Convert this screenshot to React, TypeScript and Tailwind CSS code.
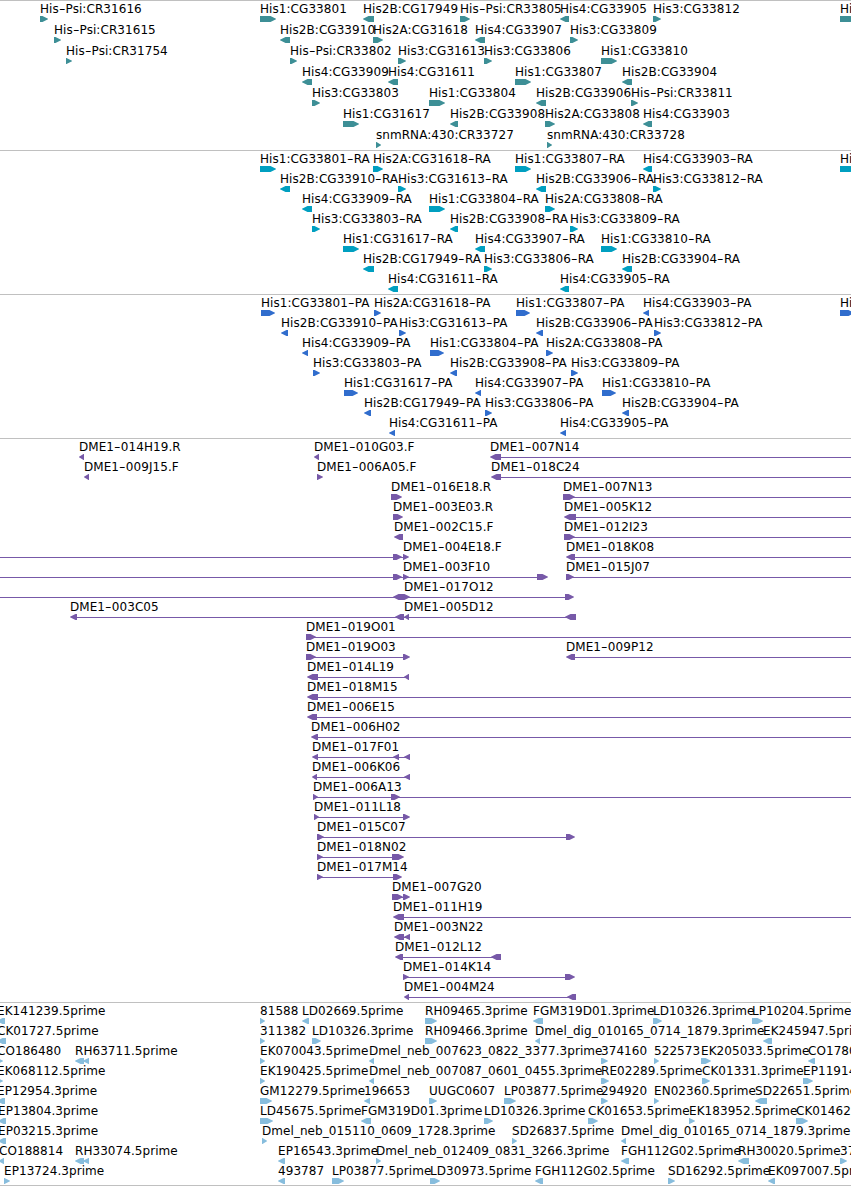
import { Fragment } from "react";

type Label = [x: number, text: string];
// negative width = feature on the reverse strand
type Glyph = [x: number, width: number];
type Feature = [text: string, x: number, width: number];

interface Row {
  labels: Label[];
  glyphs: Glyph[];
  lines?: [from: number, to: number][];
}

const END = 851;

const row = (...features: Feature[]): Row => ({
  labels: features.map(([text, x]) => [x, text]),
  glyphs: features.map(([, x, width]) => [x, width]),
});

const genes: Row[] = [
  row(["His-Psi:CR31616", 40, 8], ["His1:CG33801", 260, 16], ["His2B:CG17949", 363, -11], ["His-Psi:CR33805", 460, 10], ["His4:CG33905", 560, -9], ["His3:CG33812", 653, 8], ["His", 840, 16]),
  row(["His-Psi:CR31615", 54, 7], ["His2B:CG33910", 280, -10], ["His2A:CG31618", 373, 10], ["His4:CG33907", 475, -10], ["His3:CG33809", 570, 8]),
  row(["His-Psi:CR31754", 66, 6], ["His-Psi:CR33802", 290, 7], ["His3:CG31613", 398, 8], ["His3:CG33806", 484, 8], ["His1:CG33810", 601, 16]),
  row(["His4:CG33909", 302, -10], ["His4:CG31611", 388, -10], ["His1:CG33807", 515, 16], ["His2B:CG33904", 622, -10]),
  row(["His3:CG33803", 312, 8], ["His1:CG33804", 429, 16], ["His2B:CG33906", 536, -10], ["His-Psi:CR33811", 631, 7]),
  row(["His1:CG31617", 343, 16], ["His2B:CG33908", 450, -8], ["His2A:CG33808", 545, 10], ["His4:CG33903", 643, -9]),
  row(["snmRNA:430:CR33727", 376, 5], ["snmRNA:430:CR33728", 547, 5]),
];

const transcripts: Row[] = [
  row(["His1:CG33801-RA", 260, 16], ["His2A:CG31618-RA", 373, 10], ["His1:CG33807-RA", 515, 16], ["His4:CG33903-RA", 643, -9], ["His", 840, 16]),
  row(["His2B:CG33910-RA", 280, -10], ["His3:CG31613-RA", 398, 8], ["His2B:CG33906-RA", 536, -10], ["His3:CG33812-RA", 653, 8]),
  row(["His4:CG33909-RA", 302, -10], ["His1:CG33804-RA", 429, 16], ["His2A:CG33808-RA", 545, 10]),
  row(["His3:CG33803-RA", 312, 8], ["His2B:CG33908-RA", 450, -8], ["His3:CG33809-RA", 570, 8]),
  row(["His1:CG31617-RA", 343, 16], ["His4:CG33907-RA", 475, -10], ["His1:CG33810-RA", 601, 16]),
  row(["His2B:CG17949-RA", 363, -11], ["His3:CG33806-RA", 484, 8], ["His2B:CG33904-RA", 622, -10]),
  row(["His4:CG31611-RA", 388, -10], ["His4:CG33905-RA", 560, -9]),
];

const proteins: Row[] = [
  row(["His1:CG33801-PA", 261, 14], ["His2A:CG31618-PA", 374, 7], ["His1:CG33807-PA", 516, 14], ["His4:CG33903-PA", 643, -6], ["His", 840, 14]),
  row(["His2B:CG33910-PA", 281, -7], ["His3:CG31613-PA", 399, 7], ["His2B:CG33906-PA", 536, -7], ["His3:CG33812-PA", 654, 7]),
  row(["His4:CG33909-PA", 302, -6], ["His1:CG33804-PA", 430, 14], ["His2A:CG33808-PA", 546, 7]),
  row(["His3:CG33803-PA", 313, 7], ["His2B:CG33908-PA", 450, -7], ["His3:CG33809-PA", 571, 7]),
  row(["His1:CG31617-PA", 344, 14], ["His4:CG33907-PA", 475, -6], ["His1:CG33810-PA", 602, 14]),
  row(["His2B:CG17949-PA", 364, -7], ["His3:CG33806-PA", 485, 7], ["His2B:CG33904-PA", 622, -7]),
  row(["His4:CG31611-PA", 389, -6], ["His4:CG33905-PA", 560, -6]),
];

const clones: Row[] = [
  { labels: [[79, "DME1-014H19.R"], [314, "DME1-010G03.F"], [490, "DME1-007N14"]], glyphs: [[79, -5], [314, -5], [490, -11]], lines: [[500, END]] },
  { labels: [[84, "DME1-009J15.F"], [317, "DME1-006A05.F"], [491, "DME1-018C24"]], glyphs: [[84, -5], [317, 6], [491, -10]], lines: [[500, END]] },
  { labels: [[391, "DME1-016E18.R"], [563, "DME1-007N13"]], glyphs: [[391, 11], [563, 12]], lines: [[570, END]] },
  { labels: [[393, "DME1-003E03.R"], [564, "DME1-005K12"]], glyphs: [[393, 10], [564, -12]], lines: [[570, END]] },
  { labels: [[394, "DME1-002C15.F"], [564, "DME1-012I23"]], glyphs: [[394, -9], [564, 11]], lines: [[570, END]] },
  { labels: [[403, "DME1-004E18.F"], [566, "DME1-018K08"]], glyphs: [[393, 9], [403, 6], [566, -9]], lines: [[0, 405], [570, END]] },
  { labels: [[403, "DME1-003F10"], [566, "DME1-015J07"]], glyphs: [[393, 9], [403, 6], [537, 11], [566, 8]], lines: [[0, 540], [570, END]] },
  { labels: [[404, "DME1-017O12"]], glyphs: [[393, -8], [401, 9], [565, 9]], lines: [[0, 570]] },
  { labels: [[70, "DME1-003C05"], [404, "DME1-005D12"]], glyphs: [[70, -7], [395, -9], [404, -5], [565, -11]], lines: [[75, 570]] },
  { labels: [[306, "DME1-019O01"]], glyphs: [[306, 10]], lines: [[310, END]] },
  { labels: [[306, "DME1-019O03"], [566, "DME1-009P12"]], glyphs: [[306, 10], [403, 7], [566, -9]], lines: [[310, 405], [570, END]] },
  { labels: [[307, "DME1-014L19"]], glyphs: [[307, -11], [404, -5]], lines: [[312, 409]] },
  { labels: [[307, "DME1-018M15"]], glyphs: [[307, -11]], lines: [[312, END]] },
  { labels: [[307, "DME1-006E15"]], glyphs: [[307, -10]], lines: [[312, END]] },
  { labels: [[311, "DME1-006H02"]], glyphs: [[311, -7]], lines: [[315, END]] },
  { labels: [[312, "DME1-017F01"]], glyphs: [[312, -6], [393, -6], [404, -6]], lines: [[315, 409]] },
  { labels: [[312, "DME1-006K06"]], glyphs: [[312, -5], [404, -6]], lines: [[315, 409]] },
  { labels: [[313, "DME1-006A13"]], glyphs: [[313, 5], [391, 9]], lines: [[315, END]] },
  { labels: [[314, "DME1-011L18"]], glyphs: [[314, 5], [403, 7]], lines: [[315, 405]] },
  { labels: [[317, "DME1-015C07"]], glyphs: [[317, 7], [566, 9]], lines: [[320, 570]] },
  { labels: [[317, "DME1-018N02"]], glyphs: [[317, 6], [392, 12]], lines: [[320, 395]] },
  { labels: [[317, "DME1-017M14"]], glyphs: [[317, 6], [393, 9]], lines: [[320, 395]] },
  { labels: [[392, "DME1-007G20"]], glyphs: [[392, 11], [403, 7]], lines: [[395, 405]] },
  { labels: [[393, "DME1-011H19"]], glyphs: [[393, -11]], lines: [[397, END]] },
  { labels: [[394, "DME1-003N22"]], glyphs: [[394, -10], [404, -6]], lines: [[397, 409]] },
  { labels: [[395, "DME1-012L12"]], glyphs: [[395, -8], [491, -10]], lines: [[399, 495]] },
  { labels: [[403, "DME1-014K14"]], glyphs: [[403, 6], [565, 10]], lines: [[405, 570]] },
  { labels: [[404, "DME1-004M24"]], glyphs: [[404, -5], [567, -9]], lines: [[407, 570]] },
];

const ests: Row[] = [
  row(["EK141239.5prime", -3, -8], ["81588", 260, 5], ["LD02669.5prime", 302, -7], ["RH09465.3prime", 425, 12], ["FGM319D01.3prime", 533, -10], ["LD10326.3prime", 653, 9], ["LP10204.5prime", 752, 11]),
  row(["CK01727.5prime", -3, -9], ["311382", 260, 5], ["LD10326.3prime", 312, 9], ["RH09466.3prime", 425, 12], ["Dmel_dig_010165_0714_1879.3prime", 535, -5], ["EK245947.5prime", 763, -9]),
  {
    labels: [[-3, "CO186480"], [75, "RH63711.5prime"], [260, "EK070043.5prime"], [369, "Dmel_neb_007623_0822_3377.3prime"], [601, "374160"], [654, "522573"], [701, "EK205033.5prime"], [808, "CO1780"]],
    glyphs: [[-3, 6], [75, -9], [83, -6], [260, 5], [369, -5], [601, 7], [654, 5], [701, 10], [808, -7]],
  },
  row(["EK068112.5prime", -3, 6], ["EK190425.5prime", 260, 5], ["Dmel_neb_007087_0601_0455.3prime", 369, -5], ["RE02289.5prime", 601, 8], ["CK01331.3prime", 702, 8], ["EP11914", 803, 10]),
  row(["EP12954.3prime", -3, -8], ["GM12279.5prime", 260, 12], ["196653", 364, -6], ["UUGC0607", 429, 8], ["LP03877.5prime", 504, 12], ["294920", 601, 7], ["EN02360.5prime", 654, 5], ["SD22651.5prime", 755, -12]),
  row(["EP13804.3prime", -2, -8], ["LD45675.5prime", 260, 13], ["FGM319D01.3prime", 361, -10], ["LD10326.3prime", 484, 9], ["CK01653.5prime", 588, 10], ["EK183952.5prime", 689, 6], ["CK01462", 796, 12]),
  row(["EP03215.3prime", -2, -8], ["Dmel_neb_015110_0609_1728.3prime", 262, 5], ["SD26837.5prime", 512, 5], ["Dmel_dig_010165_0714_1879.3prime", 621, -5]),
  {
    labels: [[-1, "CO188814"], [75, "RH33074.5prime"], [278, "EP16543.3prime"], [376, "Dmel_neb_012409_0831_3266.3prime"], [621, "FGH112G02.5prime"], [738, "RH30020.5prime"], [840, "37"]],
    glyphs: [[-1, -5], [75, -9], [83, -6], [278, -7], [376, 5], [621, -8], [738, -11], [840, 7]],
  },
  row(["EP13724.3prime", 4, 6], ["493787", 278, -7], ["LP03877.5prime", 332, 12], ["LD30973.5prime", 430, 10], ["FGH112G02.5prime", 535, -8], ["SD16292.5prime", 668, 7], ["EK097007.5prime", 768, -7]),
];

function Arrow({ x, width }: { x: number; width: number }) {
  const w = Math.abs(width);
  const head = Math.min(w, 6);
  const points =
    width > 0
      ? `0,0 ${w - head + 0.5},0 ${w},2.7 ${w},3.3 ${w - head + 0.5},6 0,6`
      : `${w},0 ${head - 0.5},0 0,2.7 0,3.3 ${head - 0.5},6 ${w},6`;
  return (
    <svg className="absolute top-[15px] h-1.5" style={{ left: x }} width={w} height={6} fill="currentColor">
      <polygon points={points} />
    </svg>
  );
}

// hyphens are drawn as a wide dash
function Name({ text }: { text: string }) {
  return text.split("-").map((part, i) => (
    <Fragment key={i}>
      {i > 0 && <span className="mx-[1.2px] inline-block scale-x-150">-</span>}
      {part}
    </Fragment>
  ));
}

function Track({ rows, className, rowClass = "h-5" }: { rows: Row[]; className: string; rowClass?: string }) {
  return (
    <section className={`overflow-hidden border-t border-[#c0c0c0] ${className}`}>
      {rows.map((r, i) => (
        <div key={i} className={`relative ${rowClass}`}>
          {r.lines?.map(([from, to]) => (
            <div key={from} className="absolute top-[18px] h-px bg-current" style={{ left: from, width: to - from }} />
          ))}
          {r.glyphs.map(([x, width]) => (
            <Arrow key={x} x={x} width={width} />
          ))}
          {r.labels.map(([x, text]) => (
            <span key={x} className="absolute top-0 leading-4 tracking-[0.06px] whitespace-nowrap text-black" style={{ left: x }}>
              <Name text={text} />
            </span>
          ))}
        </div>
      ))}
    </section>
  );
}

export default function App() {
  return (
    <main className="flex h-[1186px] w-[851px] flex-col overflow-hidden bg-white font-['DejaVu_Sans',sans-serif] text-xs">
      <Track rows={genes} className="h-[150px] text-[#3d8f96]" rowClass="h-[21px]" />
      <Track rows={transcripts} className="h-36 text-[#009fc0]" />
      <Track rows={proteins} className="h-36 text-[#306dcd]" />
      <Track rows={clones} className="h-[564px] text-[#7759a8]" />
      <Track rows={ests} className="h-[184px] border-b text-[#87bddd]" />
    </main>
  );
}
